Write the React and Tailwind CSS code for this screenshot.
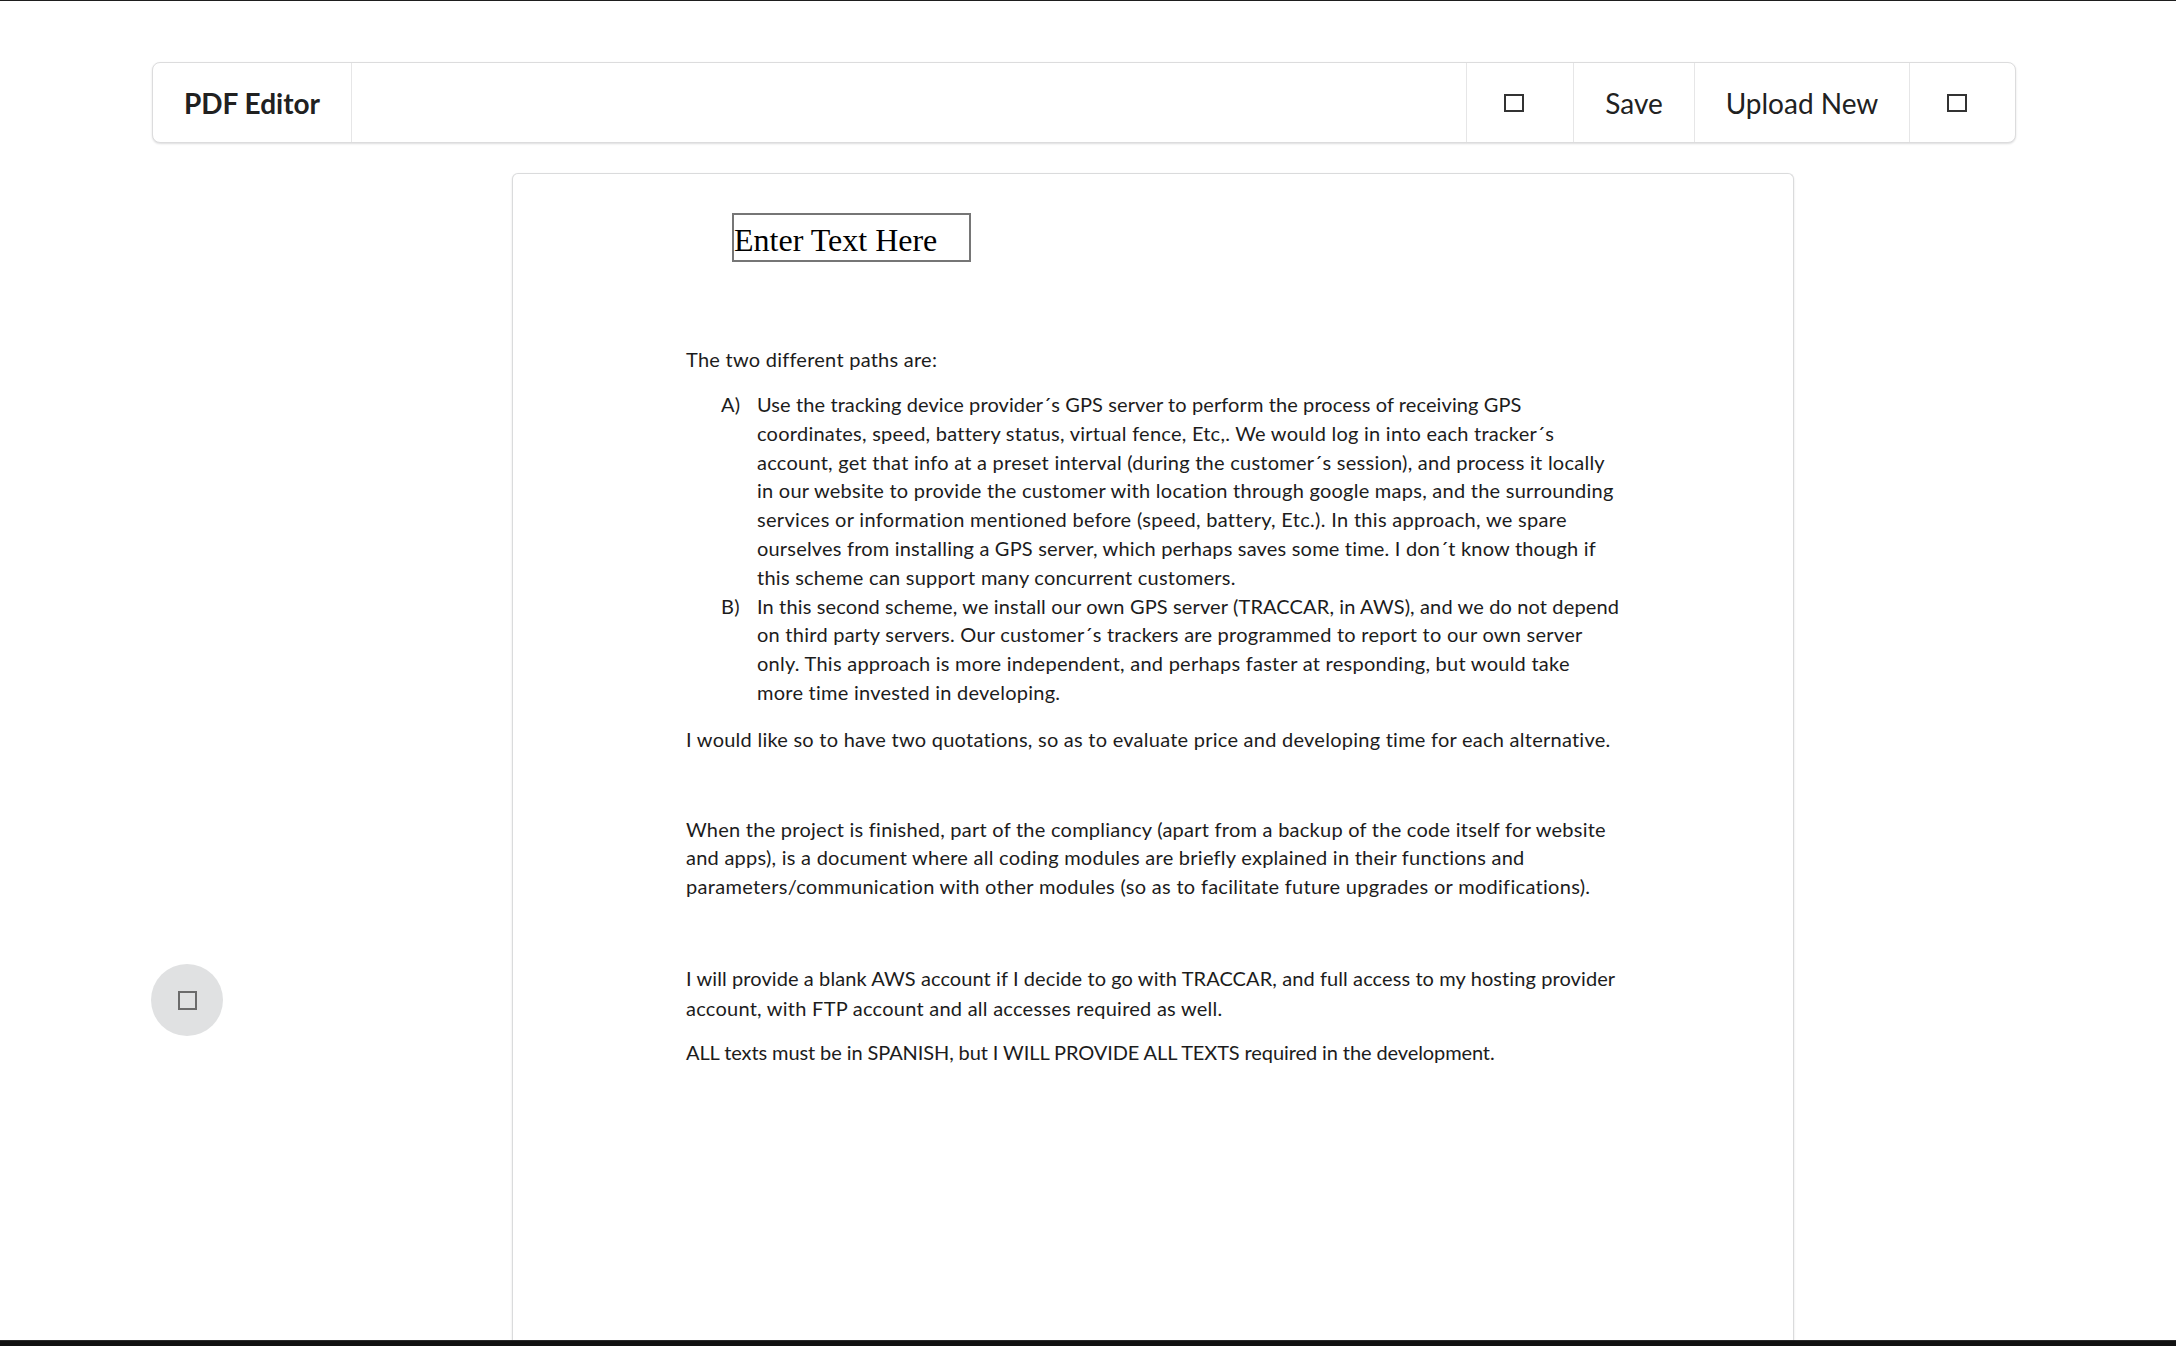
import React from "react";

function Tofu({ className }) {
  return <span className={className} />;
}

const listA = [
  ["Use the tracking device provider´s GPS server to perform the process of receiving GPS", "tracking-[0.1px]"],
  ["coordinates, speed, battery status, virtual fence, Etc,. We would log in into each tracker´s", ""],
  ["account, get that info at a preset interval (during the customer´s session), and process it locally", ""],
  ["in our website to provide the customer with location through google maps, and the surrounding", ""],
  ["services or information mentioned before (speed, battery, Etc.). In this approach, we spare", "tracking-[0.31px]"],
  ["ourselves from installing a GPS server, which perhaps saves some time. I don´t know though if", "tracking-[0.19px]"],
  ["this scheme can support many concurrent customers.", ""],
];
const listB = [
  ["In this second scheme, we install our own GPS server (TRACCAR, in AWS), and we do not depend", "tracking-[0.13px]"],
  ["on third party servers. Our customer´s trackers are programmed to report to our own server", ""],
  ["only. This approach is more independent, and perhaps faster at responding, but would take", ""],
  ["more time invested in developing.", ""],
];

function Line({ children, className = "" }) {
  return <div className={"h-[28.8px] leading-[28.8px] whitespace-nowrap " + className}>{children}</div>;
}

function ListItem({ label, lines }) {
  return (
    <div className="flex">
      <div className="w-[71px] pl-[35px] h-[28.8px] leading-[28.8px]">{label}</div>
      <div>
        {lines.map(([l, c], i) => (
          <Line key={i} className={c}>{l}</Line>
        ))}
      </div>
    </div>
  );
}

export default function App() {
  return (
    <div className="h-[1346px] overflow-hidden bg-white border-t border-[#1e1e1e] flex flex-col font-['Lato',sans-serif] text-[#212121]">
      <div className="pt-[61px] pl-[152px] shrink-0">
        <div className="w-[1864px] h-[81px] flex items-stretch border border-[#dcdcdd] rounded-[8px] shadow-[0_1px_2px_0_rgba(34,36,38,0.15)] bg-white text-[28px] leading-none">
          <div className="w-[199px] flex items-center justify-center font-bold border-r border-[#e6e6e7]">
            PDF Editor
          </div>
          <div className="ml-auto flex items-stretch">
            <div className="w-[107px] flex items-center justify-center border-l border-[#e6e6e7]">
              <Tofu className="block w-[20px] h-[18px] border-2 border-[#333] -ml-[13px]" />
            </div>
            <div className="w-[121px] flex items-center justify-center border-l border-[#e6e6e7]">Save</div>
            <div className="w-[215px] flex items-center justify-center border-l border-[#e6e6e7]">Upload New</div>
            <div className="w-[106px] flex items-center justify-center border-l border-[#e6e6e7]">
              <Tofu className="block w-[20px] h-[18px] border-2 border-[#333] -ml-[11px]" />
            </div>
          </div>
        </div>
      </div>

      <div className="flex flex-1 min-h-0 pl-[151px] pt-[30px]">
        <div className="w-[361px] shrink-0 pt-[791px]">
          <button className="w-[72px] h-[72px] rounded-full bg-[#e0e1e2] flex items-center justify-center">
            <Tofu className="block w-[19px] h-[19px] border-2 border-[#6b6b6b]" />
          </button>
        </div>

        <div className="relative w-[1282px] shrink-0 h-full border border-b-0 border-[#dadbdc] rounded-t-[6px] shadow-[0_1px_2px_0_rgba(34,36,38,0.15)] bg-white pl-[173px] pt-[171px] font-['Lato',sans-serif] text-[20px] tracking-[0.25px] text-[#1c1c1c]">
          <div className="absolute left-[219px] top-[39px] w-[239px] h-[49px] border-2 border-[#767676] bg-white pt-[4px] flex items-center font-['Liberation_Serif',serif] text-[32px] tracking-normal text-black leading-none">
            Enter Text Here
          </div>

          <div className="h-[29px] leading-[29px] whitespace-nowrap">The two different paths are:</div>
          <div className="mt-[16px]">
            <ListItem label="A)" lines={listA} />
            <ListItem label="B)" lines={listB} />
          </div>
          <div className="mt-[18px]">
            <Line>I would like so to have two quotations, so as to evaluate price and developing time for each alternative.</Line>
          </div>
          <div className="mt-[61px]">
            <Line>When the project is finished, part of the compliancy (apart from a backup of the code itself for website</Line>
            <Line>and apps), is a document where all coding modules are briefly explained in their functions and</Line>
            <Line className="tracking-[0.3px]">parameters/communication with other modules (so as to facilitate future upgrades or modifications).</Line>
          </div>
          <div className="mt-[62px]">
            <div className="h-[30px] leading-[30px] whitespace-nowrap tracking-[0.09px]">I will provide a blank AWS account if I decide to go with TRACCAR, and full access to my hosting provider</div>
            <div className="h-[30px] leading-[30px] whitespace-nowrap">account, with FTP account and all accesses required as well.</div>
          </div>
          <div className="mt-[15px]">
            <Line className="tracking-[-0.1px]">ALL texts must be in SPANISH, but I WILL PROVIDE ALL TEXTS required in the development.</Line>
          </div>
        </div>
      </div>

      <div className="h-[6px] shrink-0 bg-[#111] border-t border-[#2b2b2b]" />
    </div>
  );
}
